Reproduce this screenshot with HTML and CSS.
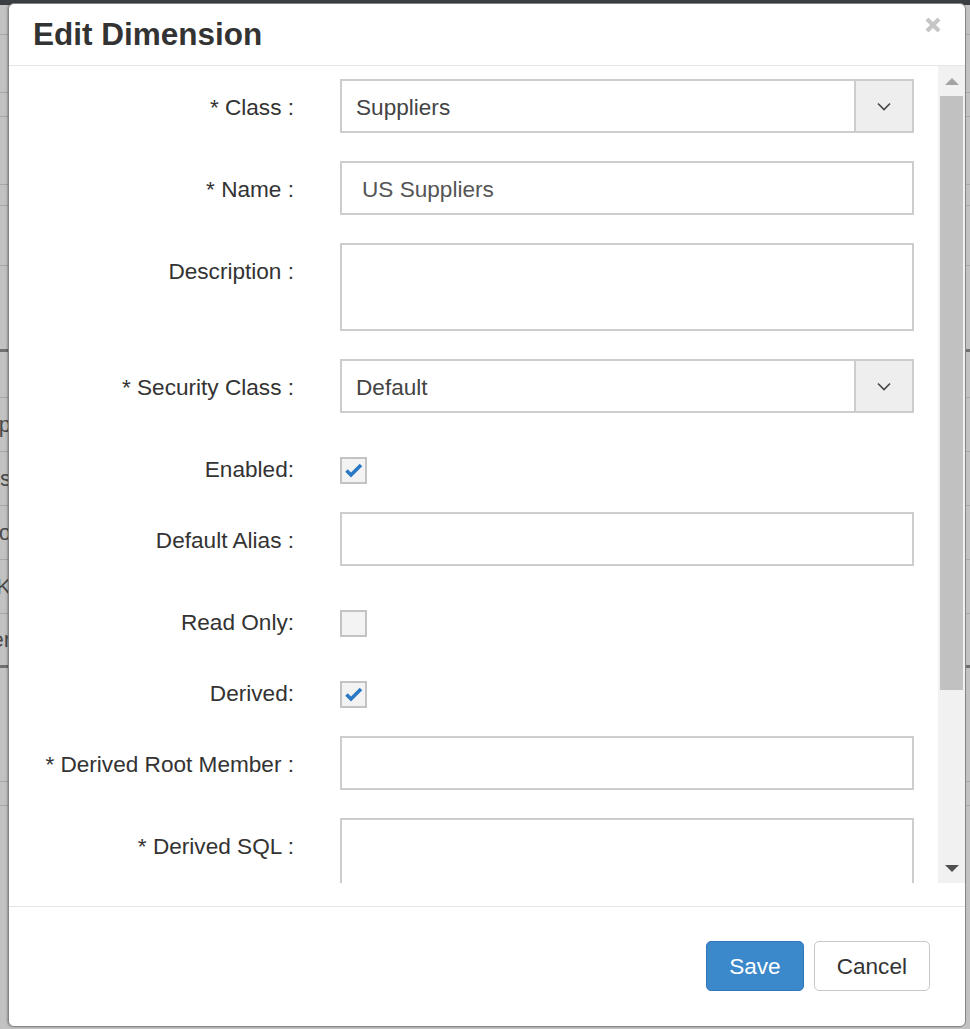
FILE: index.html
```html
<!DOCTYPE html>
<html>
<head>
<meta charset="utf-8">
<title>Edit Dimension</title>
<link rel="stylesheet" href="styles.css">
</head>
<body>
<div class="bg">
  <div class="bg-nav"></div>
  <div class="bg-row h30"></div>
  <div class="bg-row h58"></div>
  <div class="bg-row h24"></div>
  <div class="bg-row h68"></div>
  <div class="bg-row h21"></div>
  <div class="bg-row h60"></div>
  <div class="bg-row h83 dark"></div>
  <div class="bg-row h46"></div>
  <div class="bg-row h54"><span class="bg-cell"><span>Temp</span></span></div>
  <div class="bg-row h54"><span class="bg-cell"><span>Users</span></span></div>
  <div class="bg-row h54"><span class="bg-cell"><span>Geo</span></span></div>
  <div class="bg-row h54"><span class="bg-cell"><span>OK</span></span></div>
  <div class="bg-row h54 dark"><span class="bg-cell"><span>Order</span></span></div>
  <div class="bg-row h114"></div>
  <div class="bg-row h24"></div>
</div>

<div class="modal">
  <div class="modal-header">
    <h4 class="modal-title">Edit Dimension</h4>
    <span class="close" aria-label="Close"><svg width="16" height="16" viewBox="0 0 16 16"><path d="M2 2 L14 14 M14 2 L2 14" stroke="#c6c6c6" stroke-width="4.2" fill="none"/></svg></span>
  </div>
  <div class="modal-body">
    <div class="form">
      <div class="row">
        <div class="lbl">* Class :</div>
        <div class="select">
          <div class="sel-val">Suppliers</div>
          <div class="sel-btn"><svg width="14" height="9" viewBox="0 0 14 9"><path d="M1 1.5 L7 7.5 L13 1.5" fill="none" stroke="#444" stroke-width="1.6"/></svg></div>
        </div>
      </div>
      <div class="row">
        <div class="lbl">* Name :</div>
        <div class="input">US Suppliers</div>
      </div>
      <div class="row">
        <div class="lbl">Description :</div>
        <div class="input textarea"></div>
      </div>
      <div class="row">
        <div class="lbl">* Security Class :</div>
        <div class="select">
          <div class="sel-val">Default</div>
          <div class="sel-btn"><svg width="14" height="9" viewBox="0 0 14 9"><path d="M1 1.5 L7 7.5 L13 1.5" fill="none" stroke="#444" stroke-width="1.6"/></svg></div>
        </div>
      </div>
      <div class="row chk">
        <div class="lbl">Enabled:</div>
        <div class="cell"><span class="cb"><svg width="23" height="23" viewBox="0 0 23 23"><path d="M4.5 11.5 L9 16 L19 6" fill="none" stroke="#2b79c4" stroke-width="3.6"/></svg></span></div>
      </div>
      <div class="row">
        <div class="lbl">Default Alias :</div>
        <div class="input"></div>
      </div>
      <div class="row chk">
        <div class="lbl">Read Only:</div>
        <div class="cell"><span class="cb"></span></div>
      </div>
      <div class="row chk">
        <div class="lbl">Derived:</div>
        <div class="cell"><span class="cb"><svg width="23" height="23" viewBox="0 0 23 23"><path d="M4.5 11.5 L9 16 L19 6" fill="none" stroke="#2b79c4" stroke-width="3.6"/></svg></span></div>
      </div>
      <div class="row">
        <div class="lbl">* Derived Root Member :</div>
        <div class="input"></div>
      </div>
      <div class="row">
        <div class="lbl">* Derived SQL :</div>
        <div class="input textarea"></div>
      </div>
    </div>
    <div class="sb">
      <div class="sb-btn"><span class="tri-up"></span></div>
      <div class="sb-thumb"></div>
      <div class="sb-fill"></div>
      <div class="sb-btn"><span class="tri-down"></span></div>
    </div>
  </div>
  <div class="modal-footer">
    <button class="btn btn-primary">Save</button>
    <button class="btn btn-default">Cancel</button>
  </div>
</div>
</body>
</html>
```

FILE: styles.css
```css
html, body {
  margin: 0;
  padding: 0;
}
body {
  width: 970px;
  height: 1029px;
  overflow: hidden;
  position: relative;
  background: #c2c2c2;
  font-family: "Liberation Sans", Arial, sans-serif;
}

/* background page behind backdrop */
.bg {
  display: flex;
  flex-direction: column;
}
.bg-nav {
  height: 5px;
  background: #3b3e43;
}
.bg-row {
  box-sizing: border-box;
  border-bottom: 1px solid #a9a9a9;
  display: flex;
  align-items: center;
  font-size: 22px;
  color: #4a4a4a;
}
.bg-row.dark {
  border-bottom: 3px solid #707070;
}
.h21 { height: 21px; }
.h24 { height: 24px; }
.h30 { height: 30px; }
.h46 { height: 46px; }
.h54 { height: 54px; }
.h58 { height: 58px; }
.h60 { height: 60px; }
.h68 { height: 68px; }
.h83 { height: 86px; }
.h114 { height: 114px; }
.bg-cell {
  width: 11px;
  display: flex;
  justify-content: flex-end;
  white-space: nowrap;
}

/* modal */
.modal {
  position: absolute;
  left: 8px;
  top: 3px;
  width: 958px;
  height: 1024px;
  box-sizing: border-box;
  background: #fff;
  border: 1px solid #858585;
  border-radius: 6px;
  box-shadow: -1px 0 2px rgba(0,0,0,0.25);
  overflow: hidden;
  display: flex;
  flex-direction: column;
}
.modal-header {
  height: 62px;
  flex: none;
  box-sizing: border-box;
  border-bottom: 1px solid #e5e5e5;
  display: flex;
  justify-content: space-between;
  align-items: flex-start;
  padding: 0 24px 0 24px;
}
.modal-title {
  margin: 12px 0 0 0;
  font-size: 31.5px;
  line-height: 36px;
  font-weight: bold;
  color: #333;
}
.close {
  margin-top: 13px;
  margin-right: 0;
  display: flex;
}
.close svg {
  display: block;
}

.modal-body {
  display: flex;
  height: 817px;
  flex: none;
  margin-bottom: 23px;
}
.form {
  flex: 1;
  overflow: hidden;
  padding-top: 13px;
  box-sizing: border-box;
}
.row {
  display: grid;
  grid-template-columns: 285px 574px;
  column-gap: 46px;
  margin-bottom: 28px;
}
.lbl {
  text-align: right;
  font-size: 22.6px;
  padding-top: 3px;
  line-height: 51px;
  color: #333;
  white-space: nowrap;
}
.row.chk .lbl {
  line-height: 27px;
  padding-top: 15px;
}
.row.chk .cell {
  padding-top: 16px;
  display: flex;
}
.cb {
  width: 27px;
  height: 27px;
  box-sizing: border-box;
  border: 2px solid #c3c3c3;
  background: #f3f3f3;
  display: flex;
  align-items: center;
  justify-content: center;
}
.cb svg {
  display: block;
}

.input {
  height: 54px;
  box-sizing: border-box;
  border: 2px solid #cdcdcd;
  padding: 3px 19px 0 20px;
  font-size: 22.6px;
  line-height: 47px;
  color: #555;
}
.input.textarea {
  height: 88px;
}
.select {
  height: 54px;
  box-sizing: border-box;
  border: 2px solid #cdcdcd;
  display: flex;
}
.sel-val {
  flex: 1;
  padding: 3px 0 0 14px;
  font-size: 22.6px;
  line-height: 47px;
  color: #444;
}
.sel-btn {
  width: 56px;
  border-left: 2px solid #cdcdcd;
  background: #eeeeee;
  display: flex;
  align-items: center;
  justify-content: center;
}
.sel-btn svg {
  display: block;
}

/* scrollbar */
.sb {
  width: 27px;
  flex: none;
  background: #f1f1f1;
  display: flex;
  flex-direction: column;
}
.sb-btn {
  height: 30px;
  display: flex;
  align-items: center;
  justify-content: center;
}
.sb-thumb {
  height: 594px;
  margin: 0 2px;
  background: #c1c1c1;
}
.sb-fill {
  flex: 1;
}
.tri-up {
  width: 0;
  height: 0;
  border-left: 7px solid transparent;
  border-right: 7px solid transparent;
  border-bottom: 7px solid #a3a3a3;
}
.tri-down {
  width: 0;
  height: 0;
  border-left: 7px solid transparent;
  border-right: 7px solid transparent;
  border-top: 7px solid #505050;
}

/* footer */
.modal-footer {
  border-top: 1px solid #e5e5e5;
  flex: 1;
  display: flex;
  justify-content: flex-end;
  align-items: flex-start;
  gap: 10px;
  padding: 34px 35px 0 0;
}
.btn {
  height: 50px;
  padding: 2px 22px 0;
  border-radius: 5px;
  font-family: "Liberation Sans", Arial, sans-serif;
  font-size: 22.6px;
  line-height: 46px;
  border: 1px solid transparent;
  cursor: pointer;
}
.btn-primary {
  background: #3b88cb;
  border-color: #3277b8;
  color: #fff;
}
.btn-default {
  background: #fff;
  border-color: #c8c8c8;
  color: #333;
}
```
